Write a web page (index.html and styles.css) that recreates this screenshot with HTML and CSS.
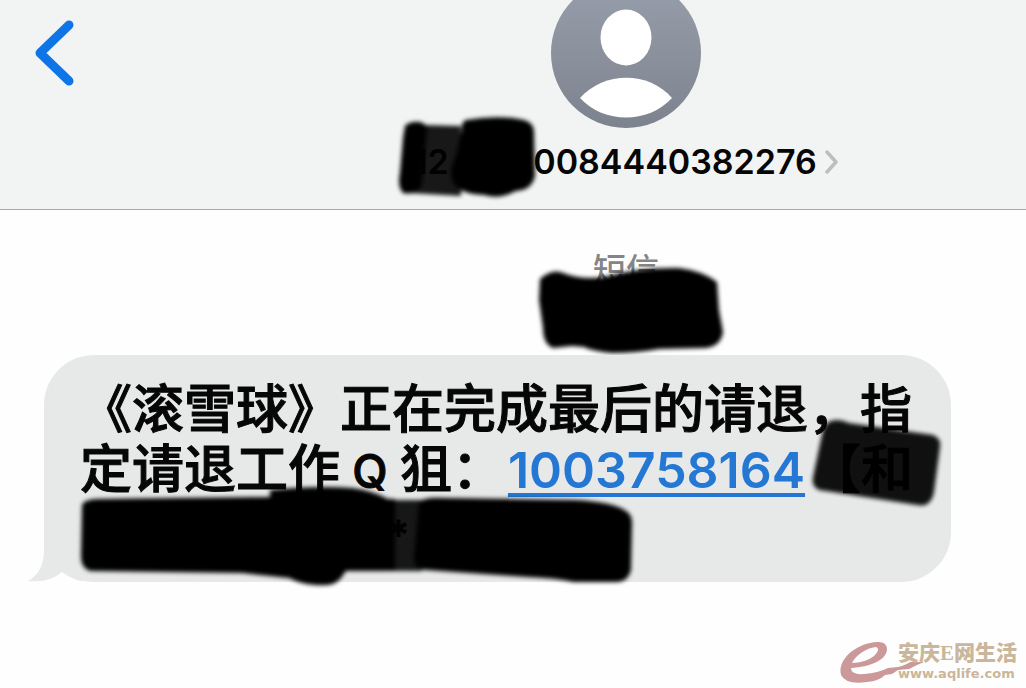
FILE: index.html
```html
<!DOCTYPE html>
<html lang="zh-CN">
<head>
<meta charset="utf-8">
<meta name="viewport" content="width=device-width, initial-scale=1">
<title>短信</title>
<link rel="stylesheet" href="styles.css">
</head>
<body>
<header class="header">
  <button class="back" type="button" aria-label="返回">
    <svg width="40" height="66" viewBox="0 0 40 66"><path d="M34 5 5 33l29 28" fill="none" stroke="#0f75e6" stroke-width="9" stroke-linecap="round" stroke-linejoin="round"/></svg>
  </button>
  <div class="contact">
    <svg class="avatar" width="150" height="128" viewBox="0 0 150 128" aria-hidden="true">
      <defs><linearGradient id="shade" x1="0" y1="0" x2="0" y2="1"><stop offset="0" stop-color="#989fac"/><stop offset="1" stop-color="#7d838e"/></linearGradient></defs>
      <circle cx="75" cy="53" r="75" fill="url(#shade)"/>
      <ellipse cx="75" cy="37.500" rx="25.500" ry="28" fill="#fff"/>
      <path d="M29 98C53 71 98 71 121 98C97 124 53 124 29 98Z" fill="#fff"/>
    </svg>
    <a class="number" href="#contact">
      <span class="masked">12</span><span>0084440382276</span>
      <svg class="chevron" width="14" height="24" viewBox="0 0 14 24" aria-hidden="true"><path d="M2 2l9 10-9 10" fill="none" stroke="#bcbebf" stroke-width="3.500" stroke-linecap="round" stroke-linejoin="round"/></svg>
      <svg class="ink ink-number" width="150" height="92" viewBox="0 0 150 92" aria-hidden="true">
        <defs><filter id="soft" x="-10%" y="-10%" width="120%" height="120%"><feGaussianBlur stdDeviation="2"/></filter></defs>
        <g filter="url(#soft)">
          <path d="M14 15Q25 11 34 15L70 16V86L18 83Q9 82 9 68Z" fill="#000" opacity=".9"/>
          <path d="M18 13Q31 9 36 17L31 74Q26 86 12 83Q6 77 9 62L12 28Q13 17 18 13Z"/>
          <path d="M75 10Q104 5 128 9Q143 11 143 22L144 66Q141 80 125 81Q108 90 93 85Q65 84 61 69Q58 60 65 45L71 20Q70 12 75 10Z"/>
        </g>
      </svg>
    </a>
  </div>
</header>
<main class="thread">
  <div class="stamp">
    <span>短信</span>
    <svg class="ink ink-stamp" width="200" height="96" viewBox="0 0 200 96" aria-hidden="true">
      <path filter="url(#soft)" d="M11 17Q24 5 37 12Q54 18 75 15Q110 5 150 6Q174 9 188 20L190 48L194 70Q192 84 177 86L130 87Q108 91 83 91Q63 89 55 85L43 84L24 86Q14 82 14 66L10 38Z"/>
    </svg>
  </div>
  <article class="bubble">
    <svg class="tail" width="60" height="60" viewBox="0 0 60 60" aria-hidden="true"><path d="M16 0V30Q15 51 0 59Q22 61 34 50Q42 56 52 59H60V0Z" fill="#e7e9e9"/></svg>
    <p class="message">《滚雪球》正在完成最后的请退，指<br>定请退工作<span class="latin"> Q </span>狙：<a class="link" href="tel:1003758164">1003758164</a>【和<br><span class="star">*</span></p>
    <svg class="ink ink-side" width="140" height="96" viewBox="0 0 140 96" aria-hidden="true">
      <path filter="url(#soft)" opacity=".93" d="M26 5Q34 2 44 7L128 19Q137 23 135 31L129 76Q126 92 112 89L14 74Q6 70 8 61L18 14Q20 7 26 5Z"/>
    </svg>
    <svg class="ink ink-line" width="570" height="112" viewBox="0 0 570 112" aria-hidden="true">
      <g filter="url(#soft)">
        <path d="M10 27Q10 21 25 20L198 18V11Q245 6 280 9Q302 12 316 20H323V92H274L269 99Q263 108 243 106Q229 105 217 99L170 94L18 92Q9 89 9 78Z"/>
        <path d="M310 21H350V92H310Z" opacity=".9"/>
        <path d="M347 24Q350 18 372 19L503 21Q542 23 554 32Q561 36 560 47L559 91Q556 103 544 103H502Q484 99 455 98L354 91Q341 90 342 78Z"/>
      </g>
    </svg>
  </article>
</main>
<aside class="watermark">
  <svg class="swoosh" width="88" height="44" viewBox="0 0 88 44" aria-hidden="true"><path fill="#cb9999" fill-rule="evenodd" d="M37 1Q47 0 47 9C46 19 30 26 11 27Q11 34 24 33Q38 32 48 27L58 26Q66 24 70 21L84 21L77 24L69 28L58 29L52 33L45 34Q39 40 27 41Q6 44 1 34C-3 18 17 2 37 1ZM36 6C26 7 16 14 12 22Q25 22 34 15Q41 8 36 6Z"/></svg>
  <div class="brand"><strong>安庆<span class="serif">E</span>网生活</strong><span class="site">www.aqlife.com</span></div>
</aside>
</body>
</html>
```
FILE: styles.css
```css
* { box-sizing: border-box; }
body {
  margin: 0;
  min-height: 100vh;
  position: relative;
  background: #fefefe;
  color: #060606;
  font-family: Inter, "Noto Sans CJK SC", sans-serif;
}
.header {
  display: flex;
  align-items: flex-start;
  height: 210px;
  background: #f2f4f4;
  border-bottom: 1px solid #a7a9a9;
}
.back {
  width: 226px;
  padding: 20px 0 0 35px;
  border: 0;
  background: none;
  text-align: left;
}
.back svg, .avatar { display: block; }
.contact {
  flex: 1;
  display: flex;
  flex-direction: column;
  align-items: center;
}
.number {
  position: relative;
  display: flex;
  align-items: center;
  margin-top: 12px;
  color: inherit;
  font-size: 34px;
  font-weight: 600;
  line-height: 44px;
  text-decoration: none;
}
.masked { width: 120px; }
.chevron { margin-left: 8px; }
.ink { position: absolute; pointer-events: none; }
.ink-number { left: -22px; top: -30px; }
.stamp {
  position: relative;
  display: flex;
  justify-content: center;
  height: 145px;
  padding: 36px 0 0 226px;
  color: #858585;
  font-size: 33px;
  font-weight: 500;
  line-height: 48px;
}
.ink-stamp { left: 529px; top: 52px; }
.bubble {
  position: relative;
  margin: 0 75px 0 44px;
  padding: 25px 36px 17px;
  border-radius: 50px;
  background: #e7e9e9;
}
.tail { position: absolute; left: -16px; bottom: 0; }
.message {
  position: relative;
  margin: 0;
  font-size: 52px;
  font-weight: 500;
  line-height: 60px;
  white-space: nowrap;
  -webkit-text-stroke: 1px;
}
.latin { font-size: 46px; }
.link {
  margin: 0 4px;
  color: #2478d4;
  font-size: 50px;
  font-weight: 600;
  text-decoration-thickness: 4px;
  text-underline-offset: 5px;
  -webkit-text-stroke: 0;
}
.star { margin-left: 308px; font-size: 40px; }
.ink-side { left: 761px; top: 61px; }
.ink-line { left: 28px; top: 124px; }
.watermark {
  position: absolute;
  right: 9px;
  bottom: 3px;
  display: flex;
  color: #cab69b;
}
.swoosh { margin-right: -30px; }
.brand { display: flex; flex-direction: column; }
.brand strong { font-size: 21px; font-weight: 900; line-height: 24px; }
.serif { font-family: "Liberation Serif", serif; }
.site {
  font-family: "DejaVu Sans", sans-serif;
  font-size: 13px;
  font-weight: 700;
  line-height: 18px;
}
```
